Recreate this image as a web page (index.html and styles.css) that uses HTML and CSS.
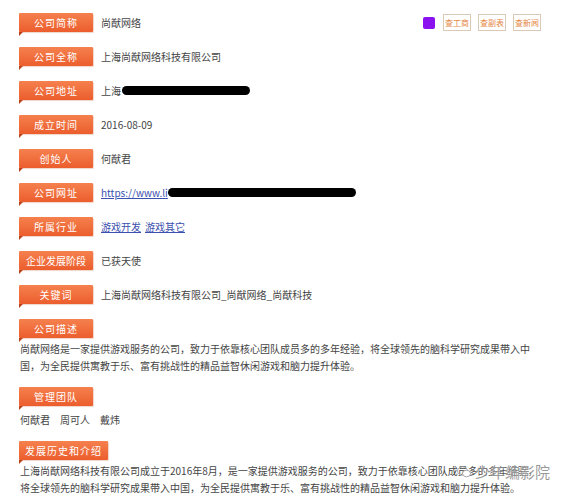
FILE: index.html
```html
<!DOCTYPE html>
<html lang="zh">
<head>
    <meta charset="UTF-8">
    <title>公司信息</title>
    <link rel="stylesheet" href="styles.css">
</head>
<body>
    <div class="info">
        <div class="row">
            <span class="tag">公司简称</span>
            <span class="value">尚猷网络</span>
            <div class="tools">
                <span class="dot"></span>
                <a class="tool">查工商</a>
                <a class="tool">查副表</a>
                <a class="tool">查新闻</a>
            </div>
        </div>
        <div class="row">
            <span class="tag">公司全称</span>
            <span class="value">上海尚猷网络科技有限公司</span>
        </div>
        <div class="row">
            <span class="tag">公司地址</span>
            <span class="value">上海<span class="mask mask-addr"></span></span>
        </div>
        <div class="row">
            <span class="tag">成立时间</span>
            <span class="value">2016-08-09</span>
        </div>
        <div class="row">
            <span class="tag">创始人</span>
            <span class="value">何猷君</span>
        </div>
        <div class="row">
            <span class="tag">公司网址</span>
            <span class="value"><a class="link">https://www.li</a><span class="mask mask-url"></span></span>
        </div>
        <div class="row">
            <span class="tag">所属行业</span>
            <span class="value"><a class="link">游戏开发</a> <a class="link">游戏其它</a></span>
        </div>
        <div class="row">
            <span class="tag tag-tight">企业发展阶段</span>
            <span class="value">已获天使</span>
        </div>
        <div class="row">
            <span class="tag">关键词</span>
            <span class="value">上海尚猷网络科技有限公司_尚猷网络_尚猷科技</span>
        </div>

        <div class="block">
            <span class="tag">公司描述</span>
            <p class="text">尚猷网络是一家提供游戏服务的公司，致力于依靠核心团队成员多的多年经验，将全球领先的脑科学研究成果带入中<br>国，为全民提供寓教于乐、富有挑战性的精品益智休闲游戏和脑力提升体验。</p>
        </div>
        <div class="block">
            <span class="tag">管理团队</span>
            <p class="text team"><span>何猷君</span><span>周可人</span><span>戴炜</span></p>
        </div>
        <div class="block">
            <span class="tag tag-wide">发展历史和介绍</span>
            <p class="text">上海尚猷网络科技有限公司成立于2016年8月，是一家提供游戏服务的公司，致力于依靠核心团队成员多的多年经验，<br>将全球领先的脑科学研究成果带入中国，为全民提供寓教于乐、富有挑战性的精品益智休闲游戏和脑力提升体验。</p>
        </div>
    </div>
    <div class="watermark">
        <svg width="14" height="12" viewBox="0 0 14 12">
            <ellipse cx="5.5" cy="5" rx="5" ry="4.2" fill="none" stroke="#aaa" stroke-width="1"/>
            <ellipse cx="9.5" cy="7.5" rx="4" ry="3.3" fill="#fff" stroke="#aaa" stroke-width="1"/>
        </svg>
        <span>少年编影院</span>
    </div>
</body>
</html>
```

FILE: styles.css
```css
body {
    font-family: "Noto Sans CJK SC", "Noto Sans", sans-serif;
    margin: 0;
    padding: 0;
    background-color: #fff;
    color: #444;
    font-size: 10px;
}
.info {
    padding: 13px 29px 0 19px;
}
.row {
    display: flex;
    align-items: center;
    gap: 8px;
    height: 19px;
    margin-bottom: 15px;
}
.tag {
    position: relative;
    display: inline-block;
    width: 74px;
    height: 19px;
    line-height: 19px;
    text-align: center;
    color: #fff;
    font-size: 10px;
    letter-spacing: 1px;
    background: linear-gradient(#f5814e, #ec5d2d);
    border-radius: 1px;
    box-shadow: 1px 1px 1px rgba(200, 120, 80, 0.3);
}
.tag::after {
    content: "";
    position: absolute;
    left: 0;
    bottom: -4px;
    border-top: 4px solid #b8431c;
    border-right: 4px solid transparent;
}
.tag-tight {
    letter-spacing: 0;
}
.tag-wide {
    width: 89px;
}
.value {
    display: flex;
    align-items: center;
    gap: 4px;
    white-space: nowrap;
}
.link {
    color: #3b4fae;
    text-decoration: underline;
}
.mask {
    display: inline-block;
    height: 9px;
    background: #000;
    border-radius: 5px;
}
.mask-addr {
    width: 128px;
    margin-left: -3px;
}
.mask-url {
    width: 188px;
    margin-left: -4px;
}
.tools {
    display: flex;
    align-items: center;
    gap: 7px;
    margin-left: auto;
}
.dot {
    width: 12px;
    height: 12px;
    background: #8a12ee;
    border-radius: 2px;
    margin-right: 1px;
}
.tool {
    width: 26px;
    height: 15px;
    line-height: 15px;
    border: 1px solid #d9c9b6;
    color: #e5843f;
    font-size: 8px;
    text-align: center;
}
.block {
    margin-bottom: 13px;
}
.text {
    margin: 2px 0 0 1px;
    line-height: 17px;
    white-space: nowrap;
}
.team {
    display: flex;
    gap: 10px;
    margin-top: 5px;
}
.watermark {
    position: absolute;
    left: 457px;
    top: 461px;
    display: flex;
    align-items: center;
    gap: 4px;
    color: rgba(120, 120, 120, 0.75);
    font-size: 15px;
    text-shadow: 0 0 2px #fff;
}
```
